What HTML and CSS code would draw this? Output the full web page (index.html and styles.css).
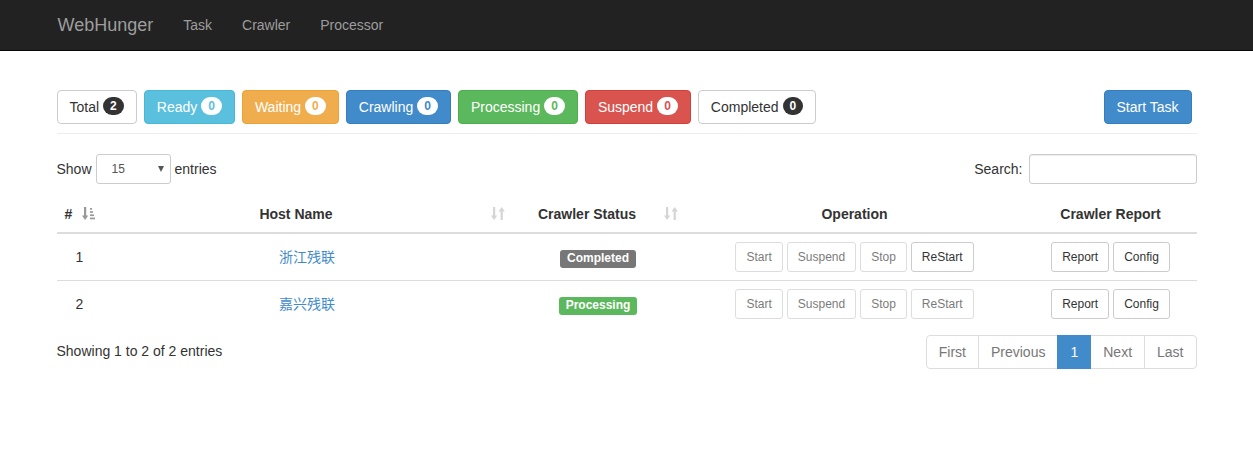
FILE: index.html
```html
<!DOCTYPE html>
<html lang="en">
<head>
<meta charset="utf-8">
<title>WebHunger</title>
<link rel="stylesheet" href="styles.css">
</head>
<body>
<nav class="navbar">
  <div class="nav-inner">
    <a class="brand" href="#">WebHunger</a>
    <a class="nav-link" href="#">Task</a>
    <a class="nav-link" href="#">Crawler</a>
    <a class="nav-link" href="#">Processor</a>
  </div>
</nav>

<main class="container">
  <div class="toolbar">
    <div class="status-group">
      <button class="btn btn-default">Total <span class="badge">2</span></button>
      <button class="btn btn-info">Ready <span class="badge">0</span></button>
      <button class="btn btn-warning">Waiting <span class="badge">0</span></button>
      <button class="btn btn-primary">Crawling <span class="badge">0</span></button>
      <button class="btn btn-success">Processing <span class="badge">0</span></button>
      <button class="btn btn-danger">Suspend <span class="badge">0</span></button>
      <button class="btn btn-default">Completed <span class="badge">0</span></button>
    </div>
    <button class="btn btn-primary btn-start">Start Task</button>
  </div>
  <hr class="divider">

  <div class="controls">
    <label class="length">Show
      <span class="select-wrap">
        <select class="form-select"><option>15</option></select>
      </span>
      entries</label>
    <label class="search">Search: <input class="form-input" type="search"></label>
  </div>

  <table class="table">
    <colgroup>
      <col class="c-num"><col class="c-host"><col class="c-status"><col class="c-op"><col class="c-report">
    </colgroup>
    <thead>
      <tr>
        <th class="sortable">#
          <svg class="sort-icon sorted" viewBox="0 0 14 15" width="14" height="15"><rect x="2" y="1" width="2.2" height="9"/><polygon points="0,9.5 6.2,9.5 3.1,14"/><rect x="8" y="2" width="2" height="1.7"/><rect x="8" y="5.2" width="3" height="1.7"/><rect x="8" y="8.4" width="4" height="1.7"/><rect x="8" y="11.6" width="5" height="1.7"/></svg>
        </th>
        <th class="sortable">Host Name
          <svg class="sort-icon" viewBox="0 0 14 15" width="14" height="15"><rect x="2" y="1" width="2.2" height="9"/><polygon points="0,9.5 6.2,9.5 3.1,14"/><polygon points="7.6,5.5 13.8,5.5 10.7,1"/><rect x="9.6" y="5" width="2.2" height="9"/></svg>
        </th>
        <th class="sortable">Crawler Status
          <svg class="sort-icon" viewBox="0 0 14 15" width="14" height="15"><rect x="2" y="1" width="2.2" height="9"/><polygon points="0,9.5 6.2,9.5 3.1,14"/><polygon points="7.6,5.5 13.8,5.5 10.7,1"/><rect x="9.6" y="5" width="2.2" height="9"/></svg>
        </th>
        <th>Operation</th>
        <th>Crawler Report</th>
      </tr>
    </thead>
    <tbody>
      <tr>
        <td>1</td>
        <td><a href="#" class="host">浙江残联</a></td>
        <td><span class="label label-default">Completed</span></td>
        <td>
          <div class="btn-row">
            <button class="btn btn-sm" disabled>Start</button>
            <button class="btn btn-sm" disabled>Suspend</button>
            <button class="btn btn-sm" disabled>Stop</button>
            <button class="btn btn-sm">ReStart</button>
          </div>
        </td>
        <td>
          <div class="btn-row">
            <button class="btn btn-sm">Report</button>
            <button class="btn btn-sm">Config</button>
          </div>
        </td>
      </tr>
      <tr>
        <td>2</td>
        <td><a href="#" class="host">嘉兴残联</a></td>
        <td><span class="label label-success">Processing</span></td>
        <td>
          <div class="btn-row">
            <button class="btn btn-sm" disabled>Start</button>
            <button class="btn btn-sm" disabled>Suspend</button>
            <button class="btn btn-sm" disabled>Stop</button>
            <button class="btn btn-sm" disabled>ReStart</button>
          </div>
        </td>
        <td>
          <div class="btn-row">
            <button class="btn btn-sm">Report</button>
            <button class="btn btn-sm">Config</button>
          </div>
        </td>
      </tr>
    </tbody>
  </table>

  <div class="footer-row">
    <div class="info">Showing 1 to 2 of 2 entries</div>
    <ul class="pagination">
      <li class="disabled"><a href="#">First</a></li>
      <li class="disabled"><a href="#">Previous</a></li>
      <li class="active"><a href="#">1</a></li>
      <li class="disabled"><a href="#">Next</a></li>
      <li class="disabled"><a href="#">Last</a></li>
    </ul>
  </div>
</main>
</body>
</html>
```

FILE: styles.css
```css
* { box-sizing: border-box; }

body {
  margin: 0;
  font-family: "Liberation Sans", Arial, "Noto Sans CJK SC", sans-serif;
  font-size: 14px;
  line-height: 20px;
  color: #333;
  background: #fff;
}

a { text-decoration: none; }

/* navbar */
.navbar {
  height: 51px;
  background: #222;
  border-bottom: 1px solid #080808;
}
.nav-inner {
  width: 1140px;
  margin: 0 auto;
  display: flex;
  align-items: center;
  height: 50px;
}
.brand {
  font-size: 18px;
  line-height: 20px;
  color: #9d9d9d;
  padding: 0 15px 0 1px;
}
.nav-link {
  color: #9d9d9d;
  padding: 0 15px;
  line-height: 20px;
}

/* container */
.container {
  width: 1140px;
  margin: 0 auto;
  padding-top: 39px;
}

.toolbar {
  display: flex;
  justify-content: space-between;
  align-items: center;
}
.status-group {
  display: flex;
  gap: 7px;
}

.btn {
  font-family: inherit;
  font-size: 14px;
  line-height: 20px;
  padding: 6px 12px;
  border: 1px solid transparent;
  border-radius: 4px;
  cursor: pointer;
  display: inline-flex;
  align-items: center;
  gap: 4px;
  white-space: nowrap;
}
.btn-default { background: #fff; border-color: #ccc; color: #333; }
.btn-info { background: #5bc0de; border-color: #46b8da; color: #fff; }
.btn-warning { background: #f0ad4e; border-color: #eea236; color: #fff; }
.btn-primary { background: #428bca; border-color: #357ebd; color: #fff; }
.btn-success { background: #5cb85c; border-color: #4cae4c; color: #fff; }
.btn-danger { background: #d9534f; border-color: #d43f3a; color: #fff; }
.btn-start { margin-right: 5px; }

.badge {
  display: inline-block;
  min-width: 10px;
  padding: 3px 7px;
  font-size: 12px;
  font-weight: bold;
  line-height: 1;
  border-radius: 10px;
  text-align: center;
  position: relative;
  top: -1px;
  background: #333;
  color: #fff;
}
.btn-info .badge { background: #fff; color: #5bc0de; }
.btn-warning .badge { background: #fff; color: #f0ad4e; }
.btn-primary .badge { background: #fff; color: #428bca; }
.btn-success .badge { background: #fff; color: #5cb85c; }
.btn-danger .badge { background: #fff; color: #d9534f; }

.divider {
  margin: 9px 0 20px;
  border: 0;
  border-top: 1px solid #eee;
  height: 0;
}

/* controls */
.controls {
  display: flex;
  justify-content: space-between;
  align-items: center;
  height: 30px;
}
.length, .search {
  display: flex;
  align-items: center;
  font-weight: normal;
}
.select-wrap {
  position: relative;
  display: inline-block;
  margin: 0 4px 0 4px;
}
.select-wrap::after {
  content: "";
  position: absolute;
  right: 7px;
  top: 12px;
  border-left: 3.5px solid transparent;
  border-right: 3.5px solid transparent;
  border-top: 6px solid #555;
  pointer-events: none;
}
.form-select {
  -webkit-appearance: none;
  appearance: none;
  width: 75px;
  height: 30px;
  padding: 5px 10px 5px 15px;
  font-family: inherit;
  font-size: 12px;
  line-height: 18px;
  color: #555;
  background: #fff;
  border: 1px solid #ccc;
  border-radius: 3px;
}
.form-input {
  width: 168px;
  height: 30px;
  margin-left: 6px;
  padding: 5px 10px;
  font-family: inherit;
  font-size: 12px;
  border: 1px solid #ccc;
  border-radius: 3px;
  box-shadow: inset 0 1px 1px rgba(0,0,0,.075);
}

/* table */
.table {
  width: 100%;
  border-collapse: collapse;
  table-layout: fixed;
  margin-top: 12px;
}
.c-num { width: 46px; }
.c-host { width: 409px; }
.c-status { width: 173px; }
.c-op { width: 340px; }
.c-report { width: 172px; }

.table th {
  position: relative;
  padding: 8px;
  font-weight: bold;
  text-align: center;
  line-height: 20px;
  border-bottom: 2px solid #ddd;
}
.table th.sortable { padding-right: 30px; }
.sort-icon {
  position: absolute;
  right: 7px;
  top: 10px;
  fill: #333;
  opacity: 0.2;
}
.sort-icon.sorted { opacity: 0.5; }

.table td {
  padding: 8px;
  text-align: center;
  vertical-align: middle;
  border-top: 1px solid #ddd;
  line-height: 20px;
}
.table tbody tr:first-child td { border-top: 0; }

.host { color: #428bca; }

.label {
  display: inline-block;
  font-size: 12px;
  font-weight: bold;
  line-height: 1;
  color: #fff;
  padding: 2px 7px 4px;
  border-radius: 3px;
  white-space: nowrap;
}
.label-default { background: #777; }
.label-success { background: #5cb85c; }

.btn-row {
  display: flex;
  justify-content: center;
  gap: 4px;
}
.btn-sm {
  font-size: 12px;
  line-height: 18px;
  padding: 5px 10px;
  border-radius: 3px;
  background: #fff;
  border: 1px solid #ccc;
  color: #333;
}
.btn-sm:disabled {
  opacity: .65;
  cursor: not-allowed;
}

/* footer */
.footer-row {
  display: flex;
  justify-content: space-between;
  align-items: flex-start;
  margin-top: 8px;
}
.info { padding-top: 6px; }

.pagination {
  display: flex;
  list-style: none;
  margin: 0;
  padding: 0;
}
.pagination li a {
  display: block;
  padding: 6px 12px;
  line-height: 20px;
  border: 1px solid #ddd;
  margin-left: -1px;
  color: #777;
  background: #fff;
}
.pagination li:first-child a {
  margin-left: 0;
  border-radius: 4px 0 0 4px;
}
.pagination li:last-child a { border-radius: 0 4px 4px 0; }
.pagination li.active a {
  background: #428bca;
  border-color: #428bca;
  color: #fff;
  position: relative;
}
```
